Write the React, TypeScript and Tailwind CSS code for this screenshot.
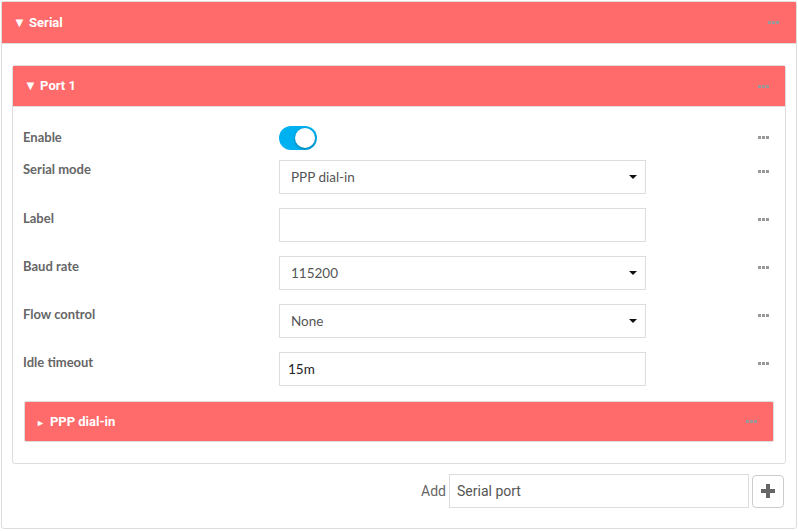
import React from 'react';

const Dots = () => (
  <div className="flex gap-[1px]">
    <span className="w-[3px] h-[3px] bg-[#999]" />
    <span className="w-[3px] h-[3px] bg-[#999]" />
    <span className="w-[3px] h-[3px] bg-[#999]" />
  </div>
);

const Caret = () => (
  <svg width="8" height="4" viewBox="0 0 8 4" className="shrink-0">
    <path d="M0 0h8L4 4z" fill="#111" />
  </svg>
);

function Row({ label, children, top = 'pt-[9px]' }: { label: string; children: React.ReactNode; top?: string }) {
  return (
    <div className="flex items-start">
      <div className={`w-[256px] shrink-0 text-[13px] font-bold text-[#666] ${top}`}>{label}</div>
      <div className="w-[367px] shrink-0">{children}</div>
      <div className="flex-1 flex justify-end pr-[16px] pt-[10px]">
        <Dots />
      </div>
    </div>
  );
}

function Select({ value }: { value: string }) {
  return (
    <div className="h-[34px] border border-[#ddd] flex items-center justify-between pl-[11px] pr-[8px] text-[13.5px] text-[#555]">
      <span>{value}</span>
      <Caret />
    </div>
  );
}

function Input({ value = '' }: { value?: string }) {
  return (
    <div className="h-[34px] border border-[#ddd] flex items-center pl-[8px] text-[13.5px] text-[#222]">
      {value}
    </div>
  );
}

export default function App() {
  return (
    <div className="w-[798px] h-[531px] bg-white pt-[1px] px-[1px]" style={{ fontFamily: 'Lato, "Open Sans", sans-serif' }}>
      <div className="border border-[#ddd] rounded-[3px] h-[528px] flex flex-col">
        {/* Serial header */}
        <div className="h-[42px] bg-[#ff6b6b] border-b border-[#ddd] flex items-center justify-between pl-[11px] pr-[17px] text-white">
          <span className="text-[13px] font-bold" style={{ fontFamily: 'Roboto, sans-serif' }}>▼ Serial</span>
          <Dots />
        </div>

        <div className="px-[10px] pt-[21px]">
          {/* Port 1 panel */}
          <div className="border border-[#ddd] rounded-[3px] h-[399px]">
            <div className="h-[41px] bg-[#ff6b6b] border-b border-[#ddd] flex items-center justify-between pl-[11px] pr-[16px] text-white">
              <span className="text-[13px] font-bold" style={{ fontFamily: 'Roboto, sans-serif' }}>▼ Port 1</span>
              <Dots />
            </div>

            <div className="pl-[10px] pt-[19px] flex flex-col gap-[14px]">
              <div className="flex items-start h-[26px]">
                <div className="w-[256px] shrink-0 text-[13px] font-bold text-[#666] pt-[2px]">Enable</div>
                <div className="w-[367px] shrink-0">
                  <div className="w-[38px] h-[24px] rounded-full bg-[#00b1f2] relative">
                    <div className="absolute right-[2px] top-[2px] w-[20px] h-[20px] rounded-full bg-white shadow-[0_1px_3px_rgba(0,0,0,0.35)]" />
                  </div>
                </div>
                <div className="flex-1 flex justify-end pr-[16px] pt-[10px]">
                  <Dots />
                </div>
              </div>
              <div className="-mt-[6px] flex flex-col gap-[14px]">
                <Row label="Serial mode" top="pt-0"><Select value="PPP dial-in" /></Row>
                <Row label="Label" top="pt-[1px]"><Input /></Row>
                <Row label="Baud rate" top="pt-[1px]"><Select value="115200" /></Row>
                <Row label="Flow control" top="pt-[1px]"><Select value="None" /></Row>
                <Row label="Idle timeout" top="pt-[1px]"><Input value="15m" /></Row>
              </div>
            </div>

            <div className="px-[11px] pt-[15px]">
              <div className="h-[41px] bg-[#ff6b6b] border border-[#ddd] rounded-[2px] flex items-center justify-between pl-[11px] pr-[16px] text-white">
                <span className="text-[13px] font-bold" style={{ fontFamily: 'Roboto, sans-serif' }}>
                  <span className="text-[9px] mr-[5px]">►</span>PPP dial-in
                </span>
                <Dots />
              </div>
            </div>
          </div>

          {/* Add row */}
          <div className="flex justify-end items-center mt-[10px] pr-[2px]">
            <span className="text-[14px] text-[#666] mr-[3px]" style={{ fontFamily: 'Roboto, sans-serif' }}>Add</span>
            <div className="w-[300px] h-[34px] border border-[#ddd] flex items-center pl-[7px] text-[14px] text-[#555]" style={{ fontFamily: 'Roboto, sans-serif' }}>
              Serial port
            </div>
            <div className="ml-[3px] w-[32px] h-[33px] border border-[#ccc] rounded-[4px] flex items-center justify-center">
              <svg width="14" height="14" viewBox="0 0 14 14">
                <path d="M5 0h4v5h5v4H9v5H5V9H0V5h5z" fill="#666" />
              </svg>
            </div>
          </div>
        </div>
      </div>
    </div>
  );
}
